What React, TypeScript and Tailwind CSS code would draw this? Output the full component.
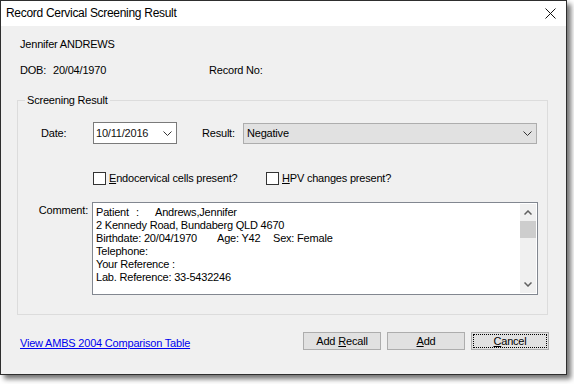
import React from "react";

const font = "font-['Liberation_Sans',Arial,sans-serif]";

function Chevron({ className = "" }: { className?: string }) {
  return (
    <svg width="9" height="5" viewBox="0 0 9 5" className={className}>
      <path d="M0.5 0.5 L4.5 4.5 L8.5 0.5" fill="none" stroke="#333" strokeWidth="1" />
    </svg>
  );
}

function Checkbox({ mn, rest }: { mn: string; rest: string }) {
  return (
    <div className="flex items-center">
      <span className="block w-[13px] h-[13px] border border-[#333] bg-white" />
      <span className="ml-[3px]">
        <span className="underline">{mn}</span>
        {rest}
      </span>
    </div>
  );
}

function Button({ children, focused }: { children: React.ReactNode; focused?: boolean }) {
  return (
    <div className="w-[78px] h-[18px] border border-[#adadad] bg-[#e1e1e1] p-[1px]">
      <div
        className={
          "w-full h-full flex items-center justify-center " +
          (focused ? "border border-dotted border-black" : "")
        }
      >
        {children}
      </div>
    </div>
  );
}

export default function App() {
  return (
    <div className={`${font} bg-white w-[574px] h-[384px] text-black text-[11px] leading-[13px] tracking-[-0.2px]`}>
      <div className="w-[567px] h-[375px] border border-[#2e2e2e] bg-[#f0f0f0] shadow-[4px_4px_5px_rgba(0,0,0,0.55)] flex flex-col">
        {/* title bar */}
        <div className="h-[25px] bg-white flex items-center justify-between pl-[5px] pr-[10px]">
          <span className="text-[12px] leading-[15px] tracking-[-0.3px]">Record Cervical Screening Result</span>
          <svg width="11" height="11" viewBox="0 0 11 11">
            <path d="M0.5 0.5 L10.5 10.5 M10.5 0.5 L0.5 10.5" stroke="#111" strokeWidth="1" />
          </svg>
        </div>

        <div className="flex flex-col pl-[16px]">
          <div className="pl-[3px] mt-[12px]">Jennifer ANDREWS</div>
          <div className="pl-[3px] mt-[13px] flex">
            <span className="w-[33px]">DOB:</span>
            <span className="w-[156px]">20/04/1970</span>
            <span>Record No:</span>
          </div>

          <fieldset className="mt-[17px] w-[531px] border border-[#dcdcdc]">
            <legend className="ml-[7px] px-[2px]">Screening Result</legend>
            <div className="flex flex-col pl-[23px] pt-[15px] pb-[19px]">
              <div className="flex items-center h-[22px]">
                <span className="w-[52px]">Date:</span>
                <div className="w-[84px] h-[22px] border border-[#7a7a7a] bg-white flex items-center justify-between pl-[2px] pr-[4px]">
                  <span className="text-[#111]">10/11/2016</span>
                  <Chevron />
                </div>
                <span className="ml-[25px] w-[41px]">Result:</span>
                <div className="w-[294px] h-[21px] border border-[#adadad] bg-[#e1e1e1] flex items-center justify-between pl-[3px] pr-[4px]">
                  <span>Negative</span>
                  <Chevron />
                </div>
              </div>

              <div className="flex mt-[28px] ml-[52px]">
                <div className="w-[173px]">
                  <Checkbox mn="E" rest="ndocervical cells present?" />
                </div>
                <Checkbox mn="H" rest="PV changes present?" />
              </div>

              <div className="flex mt-[17px]">
                <div className="w-[51px] pr-[4px] pt-[2px] flex justify-end">
                  <span className="whitespace-nowrap">Comment:</span>
                </div>
                <div className="w-[446px] h-[93px] border border-[#828790] bg-white flex">
                  <div className="flex-1 pl-[3px] pt-[3px] whitespace-pre">
                    <div className="flex">
                      <span className="w-[40px]">Patient</span>
                      <span className="w-[19px]">:</span>
                      <span>Andrews,Jennifer</span>
                    </div>
                    <div>2 Kennedy Road, Bundaberg QLD 4670</div>
                    <div className="flex">
                      <span className="w-[121px]">Birthdate: 20/04/1970</span>
                      <span className="w-[56px]">Age: Y42</span>
                      <span>Sex: Female</span>
                    </div>
                    <div>Telephone:</div>
                    <div>Your Reference :</div>
                    <div>Lab. Reference: 33-5432246</div>
                  </div>
                  <div className="w-[16px] my-[1px] mr-[1px] bg-[#f0f0f0] flex flex-col">
                    <div className="h-[17px] flex items-center justify-center">
                      <svg width="8" height="5" viewBox="0 0 8 5">
                        <path d="M0.5 4.5 L4 1 L7.5 4.5" fill="none" stroke="#606060" strokeWidth="1.5" />
                      </svg>
                    </div>
                    <div className="h-[17px] bg-[#cdcdcd]" />
                    <div className="flex-1" />
                    <div className="h-[17px] flex items-center justify-center">
                      <svg width="8" height="5" viewBox="0 0 8 5">
                        <path d="M0.5 0.5 L4 4 L7.5 0.5" fill="none" stroke="#606060" strokeWidth="1.5" />
                      </svg>
                    </div>
                  </div>
                </div>
              </div>
            </div>
          </fieldset>

          <div className="mt-[17px] flex items-end justify-between pr-[17px]">
            <span className="pl-[3px] text-[#0000ee] underline">View AMBS 2004 Comparison Table</span>
            <div className="flex gap-[6px]">
              <Button>
                Add <span className="underline ml-[3px]">R</span>ecall
              </Button>
              <Button>
                <span className="underline">A</span>dd
              </Button>
              <Button focused>
                <span className="underline">C</span>ancel
              </Button>
            </div>
          </div>
        </div>
      </div>
    </div>
  );
}
